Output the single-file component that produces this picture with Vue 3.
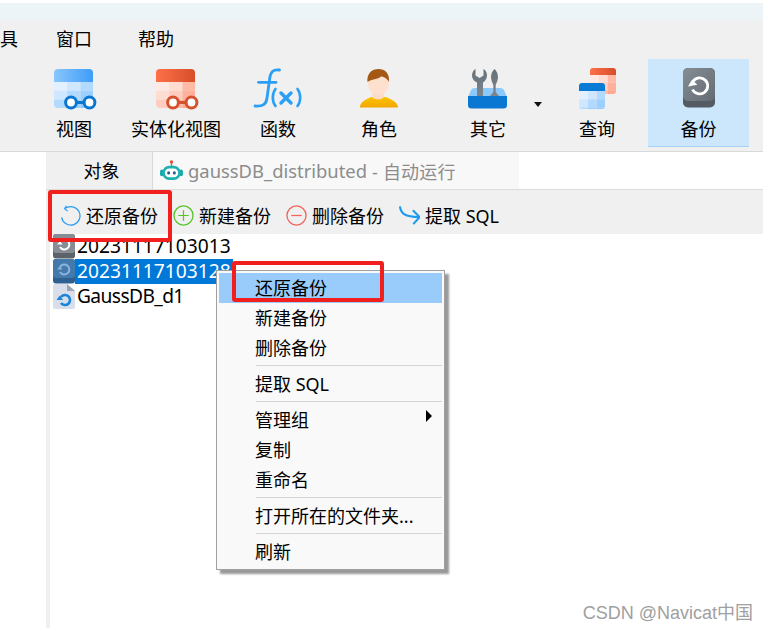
<script setup>
const tools = [
  { id: 'view', label: '视图', w: 100 },
  { id: 'mat', label: '实体化视图', w: 104 },
  { id: 'fn', label: '函数', w: 100 },
  { id: 'role', label: '角色', w: 102 },
  { id: 'other', label: '其它', w: 116 },
  { id: 'query', label: '查询', w: 102 },
  { id: 'backup', label: '备份', w: 101 },
]
const blue = ['#e2f0ff', '#cfe7ff', '#b2daff', '#cfe7ff', '#b2daff', '#9dcfff', '#b2daff', '#9dcfff', '#8fc8ff']
const red = ['#fdeae5', '#fddcd2', '#ffb9a5', '#fddcd2', '#ffcdbf', '#ffb09a', '#ffcdbf', '#ffb9a5', '#ffa78f']
const cells = (colors, x0, y0, w, h) => colors.map((fill, i) => ({ fill, x: x0 + (i % 3) * w, y: y0 + Math.floor(i / 3) * h, w, h }))
const viewCells = cells(blue, 0, 13, 13.2, 8.8)
const matCells = cells(red, 0, 13, 13.2, 8.8)
const qRed = cells(red, 11, 5, 8.9, 7.6)
const qBlue = cells(blue, 0, 14, 8.9, 8.2)
const menu = [
  { t: '还原备份', hot: true }, { t: '新建备份' }, { t: '删除备份' }, { sep: true },
  { t: '提取 SQL' }, { sep: true }, { t: '管理组', sub: true }, { t: '复制' }, { t: '重命名' }, { sep: true },
  { t: '打开所在的文件夹...' }, { sep: true }, { t: '刷新' },
]
</script>

<template>
  <div class="page">
    <div class="title-strip"></div>
    <header class="ribbon">
      <nav class="menubar">
        <span class="m1">具</span><span class="m2">窗口</span><span class="m3">帮助</span>
      </nav>
      <div class="tools">
        <div v-for="t in tools" :key="t.id" class="tool" :class="{ active: t.id === 'backup' }" :style="{ width: t.w + 'px' }">
          <svg class="ico" viewBox="0 0 40 40">
            <defs>
              <linearGradient id="gb" x1="0" x2="1" y1="0" y2="0"><stop offset="0" stop-color="#8ac6fb"/><stop offset="1" stop-color="#3b9cf9"/></linearGradient>
              <linearGradient id="gr" x1="0" x2="1" y1="0" y2="0"><stop offset="0" stop-color="#ff7049"/><stop offset="1" stop-color="#d44e29"/></linearGradient>
              <linearGradient id="gy" x1="0" x2="0" y1="0" y2="1"><stop offset="0" stop-color="#fbc400"/><stop offset="1" stop-color="#f3a600"/></linearGradient>
              <linearGradient id="gg" x1="0" x2="1" y1="0" y2="1"><stop offset="0" stop-color="#868e95"/><stop offset="1" stop-color="#646b72"/></linearGradient>
              <linearGradient id="gt" x1="0" x2="0" y1="0" y2="1"><stop offset="0" stop-color="#667079"/><stop offset="1" stop-color="#7d868d"/></linearGradient>
              <clipPath id="cv"><rect width="39" height="39" rx="4"/></clipPath>
              <clipPath id="cq1"><rect x="11" width="26" height="26" rx="3"/></clipPath>
              <clipPath id="cq2"><rect y="15" width="26" height="26" rx="3"/></clipPath>
            </defs>
            <g v-if="t.id === 'view'">
              <g clip-path="url(#cv)">
                <rect width="40" height="13" fill="url(#gb)"/>
                <rect v-for="(c, i) in viewCells" :key="i" :x="c.x" :y="c.y" :width="c.w" :height="c.h" :fill="c.fill"/>
              </g>
              <path d="M22 33.5h14" stroke="#0a78d0" stroke-width="3"/>
              <circle cx="17" cy="33.5" r="5.4" fill="#fff" stroke="#0a78d0" stroke-width="3"/>
              <circle cx="35.5" cy="33.5" r="5.4" fill="#fff" stroke="#0a78d0" stroke-width="3"/>
            </g>
            <g v-else-if="t.id === 'mat'">
              <g clip-path="url(#cv)">
                <rect width="40" height="13" fill="url(#gr)"/>
                <rect v-for="(c, i) in matCells" :key="i" :x="c.x" :y="c.y" :width="c.w" :height="c.h" :fill="c.fill"/>
              </g>
              <path d="M22 33.5h14" stroke="#d4522d" stroke-width="3"/>
              <circle cx="17" cy="33.5" r="5.4" fill="#fff" stroke="#d4522d" stroke-width="3"/>
              <circle cx="35.5" cy="33.5" r="5.4" fill="#fff" stroke="#d4522d" stroke-width="3"/>
            </g>
            <g v-else-if="t.id === 'fn'" fill="none" stroke="#2a9ff5" stroke-linecap="round">
              <path d="M21.500 1C15 0 12.500 3 11.700 9.500L9 29C8.200 35.500 5 37.500 -3 37" stroke-width="2.800"/>
              <path d="M.5 13.300H18" stroke-width="2.800"/>
              <path d="M17.500 20c-3.600 4.600-3.600 12.500 0 17M39.500 20c3.600 4.600 3.600 12.500 0 17" stroke-width="2.600"/>
              <path d="M23 24l10 10M33 24 23 34" stroke-width="3.400"/>
            </g>
            <g v-else-if="t.id === 'role'">
              <path d="M1 38.5c0-5.5 5.5-8 11-10.500h15c5.500 2.500 12 5 12 10.500z" fill="url(#gy)"/>
              <path d="M13.500 24h11v4.500c-2 2.500-9 2.500-11 0z" fill="#fcdcc6"/>
              <ellipse cx="19.500" cy="14" rx="10.500" ry="12.500" fill="#fde0cd"/>
              <path d="M8.500 13C7.500 4.500 13 0 19.500 0S31 4.500 30 13c-2-4-6-5.500-8-5.500-3 3.500-9.500 2-13.500 5.500z" fill="#a45816"/>
            </g>
            <g v-else-if="t.id === 'other'">
              <path d="M0 28L3 21Q4 19 7 19H32Q35 19 36 21L39 28z" fill="#8dc9fb"/>
              <path d="M9 27V13.500C5.500 12 4 9 4 6.500C4 3.500 5.500 1.200 7.500 0V6.500L11.500 9L15.500 6.500V0C17.500 1.200 19 3.500 19 6.500C19 9 17.500 12 15 13.500V27Z" fill="url(#gt)"/>
              <path d="M26.500 0C28.500 1.500 30 5 30 8C30 11 28.500 14 27.700 16V23L31 27H22L25.300 23V16C24.500 14 23 11 23 8C23 5 24.500 1.500 26.500 0Z" fill="url(#gt)"/>
              <path d="M0 27h39v9a3.500 3.500 0 0 1-3.500 3.500h-32A3.500 3.500 0 0 1 0 36z" fill="#0a78d2"/>
            </g>
            <g v-else-if="t.id === 'query'" transform="translate(2 -1)">
              <g clip-path="url(#cq1)">
                <rect x="11" width="26" height="7" fill="url(#gr)"/>
                <rect v-for="(c, i) in qRed" :key="i" :x="c.x" :y="c.y + 2" :width="c.w" :height="c.h" :fill="c.fill"/>
              </g>
              <g clip-path="url(#cq2)">
                <rect y="15" width="26" height="8" fill="#0a7bd5"/>
                <rect v-for="(c, i) in qBlue" :key="i" :x="c.x" :y="c.y + 9" :width="c.w" :height="c.h" :fill="c.fill"/>
              </g>
            </g>
            <g v-else>
              <rect x="4" y="-1" width="32" height="39.500" rx="5" fill="#555b62"/>
              <rect x="4" y="-1" width="32" height="33" rx="5" fill="url(#gg)"/>
              <path d="M14 12.500a8 8 0 1 1-.5 8" fill="none" stroke="#fff" stroke-width="2.800"/>
              <path d="M8.500 16.500h9.500l-4.500-6z" fill="#fff" transform="rotate(-10 14 14)"/>
            </g>
          </svg>
          <svg v-if="t.id === 'other'" class="caret" viewBox="0 0 8 5"><path d="M0 0h8L4 5z" fill="#111"/></svg>
          <span class="tool-label">{{ t.label }}</span>
        </div>
      </div>
    </header>

    <main class="workspace">
      <div class="gutter"></div>
      <div class="pane">
        <div class="tabs">
          <div class="tab-obj">对象</div>
          <div class="tab-run">
            <svg class="bot" viewBox="0 0 24 22">
              <circle cx="12" cy="2" r="1.800" fill="#e8503a"/>
              <path d="M12 3v4" stroke="#7a8a96" stroke-width="1.500"/>
              <rect x="0" y="10" width="4" height="7" rx="2" fill="#1aa8a8"/>
              <rect x="20" y="10" width="4" height="7" rx="2" fill="#1aa8a8"/>
              <rect x="2.500" y="6" width="19" height="15" rx="7" fill="#1fb0b0"/>
              <rect x="5" y="9" width="14" height="9" rx="4.500" fill="#fff"/>
              <circle cx="9" cy="13.500" r="1.600" fill="#2b5c8a"/>
              <circle cx="15" cy="13.500" r="1.600" fill="#2b5c8a"/>
            </svg>
            <span class="run-name">gaussDB_distributed</span>
            <span class="run-state">- 自动运行</span>
          </div>
        </div>
        <div class="actions">
          <div class="act">
            <svg class="act-ico" viewBox="0 0 22 22" fill="none"><path d="M5.500 3.500A9.700 9.700 0 1 1 1.700 13" stroke="#2a9df4" stroke-width="1.300"/><path d="M6.800.8 4.800 3.800l3.200 2.600" stroke="#2a9df4" stroke-width="1.300"/></svg>
            <span>还原备份</span>
          </div>
          <div class="act">
            <svg class="act-ico" viewBox="0 0 22 22" fill="none"><circle cx="11" cy="11" r="10" stroke="#56c52c" stroke-width="1.400"/><path d="M11 5.500v11M5.500 11h11" stroke="#56c52c" stroke-width="1.300"/></svg>
            <span>新建备份</span>
          </div>
          <div class="act">
            <svg class="act-ico" viewBox="0 0 22 22" fill="none"><circle cx="11" cy="11" r="10" stroke="#f2645c" stroke-width="1.400"/><path d="M5.500 11h11" stroke="#f2645c" stroke-width="1.300"/></svg>
            <span>删除备份</span>
          </div>
          <div class="act">
            <svg class="act-ico" viewBox="0 0 22 22" fill="none"><path d="M1 1.500C2 9 6 12.500 21 12.700" stroke="#1d9bf0" stroke-width="2.200"/><path d="M14.500 5.500 21.500 12.700 15 20" stroke="#1d9bf0" stroke-width="2.200"/></svg>
            <span>提取 SQL</span>
          </div>
        </div>
        <ul class="files">
          <li class="file">
            <svg class="file-ico" viewBox="0 0 22 25"><rect width="22" height="24.500" rx="3" fill="#5c6269"/><rect width="22" height="19" rx="3" fill="#868d94"/><path d="M7 8a5 5 0 1 1 0 5" fill="none" stroke="#fff" stroke-width="2"/><path d="M4 10.500h5.500L7 7z" fill="#fff"/></svg>
            <span class="name">20231117103013</span>
          </li>
          <li class="file">
            <svg class="file-ico" viewBox="0 0 22 25"><rect width="22" height="24.500" rx="3" fill="#2d5f90"/><rect width="22" height="19" rx="3" fill="#4379ab"/><path d="M7 8a5 5 0 1 1 0 5" fill="none" stroke="#8ab5dc" stroke-width="2"/><path d="M4 10.500h5.500L7 7z" fill="#8ab5dc"/></svg>
            <span class="name selected">20231117103128</span>
          </li>
          <li class="file">
            <svg class="file-ico" viewBox="0 0 22 25"><path d="M0 2a2 2 0 0 1 2-2h12l8 7v16a2 2 0 0 1-2 2H2a2 2 0 0 1-2-2z" fill="#d9dfea"/><path d="M14 0l8 7h-8z" fill="#9aa4b5"/><path d="M8 13a5 5 0 1 1 0 6" fill="none" stroke="#1985d8" stroke-width="2.600"/><path d="M3.500 16h6.500L6.800 11.500z" fill="#1985d8"/></svg>
            <span class="name short">GaussDB_d1</span>
          </li>
        </ul>
      </div>
    </main>

    <div class="ctx">
      <template v-for="(m, i) in menu" :key="i">
        <div v-if="m.sep" class="sep"></div>
        <div v-else class="ctx-item" :class="{ hot: m.hot }">
          {{ m.t }}
          <svg v-if="m.sub" class="sub" viewBox="0 0 6 12"><path d="M0 0l6 6-6 6z" fill="#000"/></svg>
        </div>
      </template>
    </div>

    <div class="mark mark-a"></div>
    <div class="mark mark-b"></div>
    <div class="wm">CSDN @Navicat中国</div>
  </div>
</template>

<style scoped>
.page {
  position: relative;
  width: 768px;
  height: 631px;
  overflow: hidden;
  background: #fff;
  color: #000;
  font-family: "Noto Sans", "Noto Sans CJK SC", sans-serif;
  font-size: 18px;
}
.title-strip {
  margin-top: 3px;
  margin-right: 5px;
  height: 17px;
  background: #ecf4f8;
}
.ribbon {
  margin-right: 5px;
  height: 132px;
  box-sizing: border-box;
  background: #f0f0f0;
  border-bottom: 1px solid #d9d9d9;
}
.menubar {
  display: flex;
  height: 39px;
  align-items: center;
  line-height: 39px;
}
.m1 { width: 18px; }
.m2 { margin-left: 38px; }
.m3 { margin-left: 46px; }
.tools {
  display: flex;
  padding-left: 24px;
}
.tool {
  position: relative;
  height: 88px;
  box-sizing: border-box;
  padding-top: 10px;
  display: flex;
  flex-direction: column;
  align-items: center;
}
.tool.active {
  background: #cce6fc;
  border-bottom: 1px solid #a5d2fb;
}
.ico {
  width: 40px;
  height: 40px;
  overflow: visible;
  flex: none;
}
.tool-label {
  margin-top: 7px;
  line-height: 26px;
  white-space: nowrap;
}
.caret {
  position: absolute;
  right: 4px;
  top: 43px;
  width: 8px;
  height: 5px;
}
.workspace {
  display: flex;
  padding-left: 46px;
  height: 476px;
}
.gutter {
  width: 4px;
  flex: none;
  background: #f0f0f0;
}
.pane {
  flex: 1;
  min-width: 0;
  margin-right: 5px;
}
.tabs {
  display: flex;
  height: 38px;
  margin-left: -4px;
  box-sizing: border-box;
  border-bottom: 1px solid #dcdcdc;
}
.tab-obj {
  width: 107px;
  box-sizing: border-box;
  padding: 1px 0 0 5px;
  text-align: center;
  line-height: 37px;
  background: #f0f0f0;
  border-right: 1px solid #d9d9d9;
}
.tab-run {
  width: 366px;
  display: flex;
  align-items: center;
  padding-left: 7px;
  box-sizing: border-box;
  background: #f8f8f8;
  color: #8c8c8c;
  white-space: nowrap;
}
.bot {
  width: 23px;
  height: 21px;
  flex: none;
  margin-right: 5px;
}
.run-name {
  font-size: 18.4px;
}
.run-state {
  margin-left: 5px;
  letter-spacing: 0.2px;
}
.actions {
  display: flex;
  align-items: center;
  height: 44px;
  box-sizing: border-box;
  padding: 6px 0 0 14px;
  margin-left: -4px;
  background: #f0f0f0;
  gap: 15px;
}
.act {
  display: flex;
  align-items: center;
  gap: 5px;
  white-space: nowrap;
}
.act-ico {
  width: 21px;
  height: 21px;
  flex: none;
}
.files {
  list-style: none;
  margin: 0;
  padding: 0 0 0 3px;
}
.file {
  display: flex;
  align-items: center;
  height: 25px;
}
.file-ico {
  width: 22px;
  height: 25px;
  flex: none;
}
.name {
  font-size: 19.2px;
  line-height: 23px;
  padding: 0 2px 2px;
  white-space: nowrap;
}
.short {
  letter-spacing: -0.6px;
}
.selected {
  background: #0078d7;
  color: #fff;
}
.ctx {
  position: absolute;
  left: 216px;
  top: 270px;
  width: 229px;
  box-sizing: border-box;
  padding: 2px;
  background: #f9f9f9;
  border: 1px solid #a0a0a0;
  box-shadow: 4px 4px 2px #999;
  font-size: 18px;
}
.ctx-item {
  position: relative;
  height: 30px;
  line-height: 30px;
  padding-left: 36px;
  white-space: nowrap;
}
.ctx-item.hot {
  background: #99ccfb;
}
.sub {
  position: absolute;
  right: 10px;
  top: 5px;
  width: 6px;
  height: 12px;
}
.sep {
  height: 1px;
  margin: 2px 0 3px 37px;
  background: #d5d5d5;
}
.mark {
  position: absolute;
  box-sizing: border-box;
  border: 4px solid #f21f1f;
  border-radius: 3px;
}
.mark-a { left: 48px; top: 190px; width: 124px; height: 52px; }
.mark-b { left: 232px; top: 261px; width: 152px; height: 41px; }
.wm {
  position: absolute;
  right: 15px;
  top: 602px;
  font-family: "Liberation Sans", "Noto Sans CJK SC", sans-serif;
  font-size: 18px;
  line-height: 22px;
  color: #a0a0a0;
  white-space: nowrap;
}
</style>
